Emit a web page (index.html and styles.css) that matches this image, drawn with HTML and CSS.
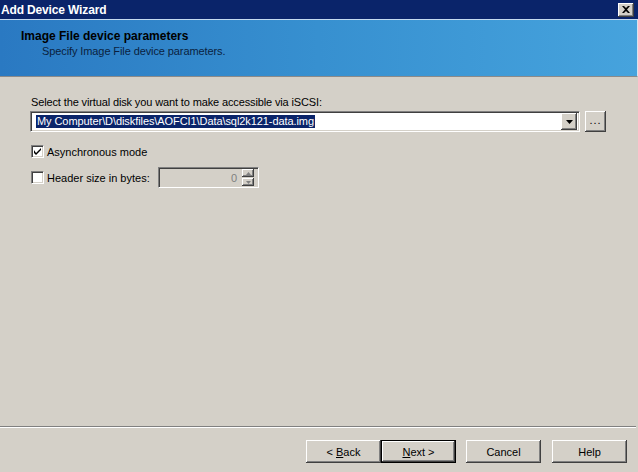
FILE: index.html
```html
<!DOCTYPE html>
<html>
<head>
<meta charset="utf-8">
<link rel="stylesheet" href="styles.css">
</head>
<body>
<div class="window">
  <div class="titlebar">
    <span class="title">Add Device Wizard</span>
    <span class="close">
      <svg width="8" height="7" viewBox="0 0 8 7"><path d="M0 0h2l2 2 2-2h2L5 3.5 8 7H6L4 5 2 7H0l3-3.5z" fill="#000"/></svg>
    </span>
  </div>
  <div class="header">
    <div class="h-title">Image File device parameters</div>
    <div class="h-sub">Specify Image File device parameters.</div>
  </div>
  <div class="content">
    <div class="label">Select the virtual disk you want to make accessible via iSCSI:</div>
    <div class="combo-row">
      <div class="combo">
        <div class="combo-text"><span class="sel">My Computer\D\diskfiles\AOFCI1\Data\sql2k121-data.img</span></div>
        <div class="drop btn3d">
          <svg width="7" height="4" viewBox="0 0 7 4"><path d="M0 0h7L3.5 4z" fill="#000"/></svg>
        </div>
      </div>
      <div class="browse btn3d">...</div>
    </div>
    <div class="check-row first">
      <span class="checkbox">
        <svg width="7" height="7" viewBox="0 0 7 7"><path d="M0 2v3l2 2 5-5V-0L2 5z" fill="#000"/></svg>
      </span>
      <span>Asynchronous mode</span>
    </div>
    <div class="check-row second">
      <span class="checkbox"></span>
      <span class="hdr-label">Header size in bytes:</span>
      <div class="spin">
        <span class="spin-val">0</span>
        <div class="spin-btns">
          <div class="spin-btn btn3d"><svg width="5" height="3" viewBox="0 0 5 3"><path d="M0 3h5L2.5 0z" fill="#808080"/></svg></div>
          <div class="spin-btn btn3d"><svg width="5" height="3" viewBox="0 0 5 3"><path d="M0 0h5L2.5 3z" fill="#808080"/></svg></div>
        </div>
      </div>
    </div>
  </div>
  <div class="separator"></div>
  <div class="buttons">
    <div class="button btn3d"><span>&lt; <u>B</u>ack</span></div>
    <div class="button btn3d default"><span><u>N</u>ext &gt;</span></div>
    <div class="button btn3d gap1"><span>Cancel</span></div>
    <div class="button btn3d gap2"><span>Help</span></div>
  </div>
</div>
</body>
</html>
```
FILE: styles.css
```css
html, body {
  margin: 0;
  padding: 0;
}
body {
  width: 638px;
  height: 472px;
  overflow: hidden;
  background: #d4d0c8;
  font-family: "Liberation Sans", Arial, sans-serif;
  font-size: 11px;
  color: #000;
}
.window {
  display: flex;
  flex-direction: column;
  height: 472px;
}
.titlebar {
  height: 19px;
  background: #0a246a;
  color: #fff;
  display: flex;
  align-items: center;
  justify-content: space-between;
  padding-left: 1px;
  box-sizing: border-box;
}
.title {
  font-weight: bold;
  font-size: 12px;
  letter-spacing: -0.15px;
}
.close {
  width: 16px;
  height: 14px;
  margin-right: 4px;
  background: #d4d0c8;
  box-sizing: border-box;
  box-shadow: inset -1px -1px 0 #404040, inset 1px 1px 0 #fff, inset -2px -2px 0 #808080;
  display: flex;
  align-items: center;
  justify-content: center;
}
.header {
  height: 58px;
  border-top: 1px solid #c5dbf0;
  border-bottom: 1px solid #8a8a8a;
  background: linear-gradient(90deg, #2a79c2 0%, #3790d0 50%, #46a3dd 100%);
  padding: 10px 0 0 21px;
  box-sizing: border-box;
  line-height: 13px;
  border-right: 1px solid #d8e4ee;
}
.h-title {
  font-weight: bold;
  font-size: 12px;
  color: #000;
}
.h-sub {
  padding-left: 21px;
  margin-top: 2px;
  color: #0a1f40;
  letter-spacing: -0.1px;
}
.content {
  flex: 1;
  padding: 18px 0 0 30px;
}
.label {
  line-height: 14px;
  padding-left: 1px;
  letter-spacing: -0.13px;
}
.combo-row {
  display: flex;
  margin-top: 2px;
  gap: 5px;
}
.combo {
  width: 550px;
  height: 21px;
  box-sizing: border-box;
  background: #fff;
  border-top: 1px solid #808080;
  border-left: 1px solid #808080;
  border-right: 1px solid #fff;
  border-bottom: 1px solid #fff;
  box-shadow: inset 1px 1px 0 #404040, inset -1px -1px 0 #d4d0c8;
  display: flex;
  align-items: center;
  padding: 0 2px 0 5px;
}
.combo-text {
  flex: 1;
}
.sel {
  background: #0a246a;
  color: #fff;
  padding: 0 1px;
  line-height: 13px;
  display: inline-block;
  letter-spacing: -0.08px;
}
.btn3d {
  background: #d4d0c8;
  box-sizing: border-box;
  box-shadow: inset -1px -1px 0 #404040, inset 1px 1px 0 #fff, inset -2px -2px 0 #808080, inset 2px 2px 0 #d4d0c8;
}
.drop {
  width: 16px;
  height: 17px;
  display: flex;
  align-items: center;
  justify-content: center;
}
.browse {
  width: 21px;
  height: 21px;
  display: flex;
  align-items: center;
  justify-content: center;
  letter-spacing: 1px;
  padding-bottom: 3px;
}
.check-row {
  display: flex;
  align-items: center;
  padding-left: 1px;
}
.check-row.first {
  margin-top: 13px;
  height: 13px;
}
.check-row.second {
  margin-top: 9px;
  height: 21px;
}
.checkbox {
  width: 13px;
  height: 13px;
  box-sizing: border-box;
  background: #fff;
  border-top: 1px solid #808080;
  border-left: 1px solid #808080;
  border-right: 1px solid #fff;
  border-bottom: 1px solid #fff;
  box-shadow: inset 1px 1px 0 #404040, inset -1px -1px 0 #d4d0c8;
  display: flex;
  align-items: center;
  justify-content: center;
  margin-right: 3px;
}
.hdr-label {
  width: 111px;
}
.spin {
  width: 101px;
  height: 21px;
  box-sizing: border-box;
  background: #d4d0c8;
  border-top: 1px solid #808080;
  border-left: 1px solid #808080;
  border-right: 1px solid #fff;
  border-bottom: 1px solid #fff;
  box-shadow: inset 1px 1px 0 #404040, inset -1px -1px 0 #d4d0c8;
  display: flex;
  align-items: center;
  justify-content: flex-end;
  padding: 2px 4px 2px 2px;
}
.spin-val {
  color: #808080;
  margin-right: 5px;
}
.spin-btns {
  display: flex;
  flex-direction: column;
  height: 17px;
}
.spin-btn {
  width: 12px;
  height: 8px;
  display: flex;
  align-items: center;
  justify-content: center;
}
.spin-btn + .spin-btn {
  margin-top: 1px;
}
.separator {
  border-top: 1px solid #808080;
  border-bottom: 1px solid #fff;
  margin-right: 2px;
}
.buttons {
  display: flex;
  justify-content: flex-end;
  padding: 12px 11px 9px 0;
}
.button {
  width: 75px;
  height: 23px;
  display: flex;
  align-items: center;
  justify-content: center;
}
.button.default {
  border: 1px solid #000;
}
.button.gap1 {
  margin-left: 10px;
}
.button.gap2 {
  margin-left: 11px;
}
u {
  text-decoration: underline;
  text-underline-offset: 1px;
}
```
